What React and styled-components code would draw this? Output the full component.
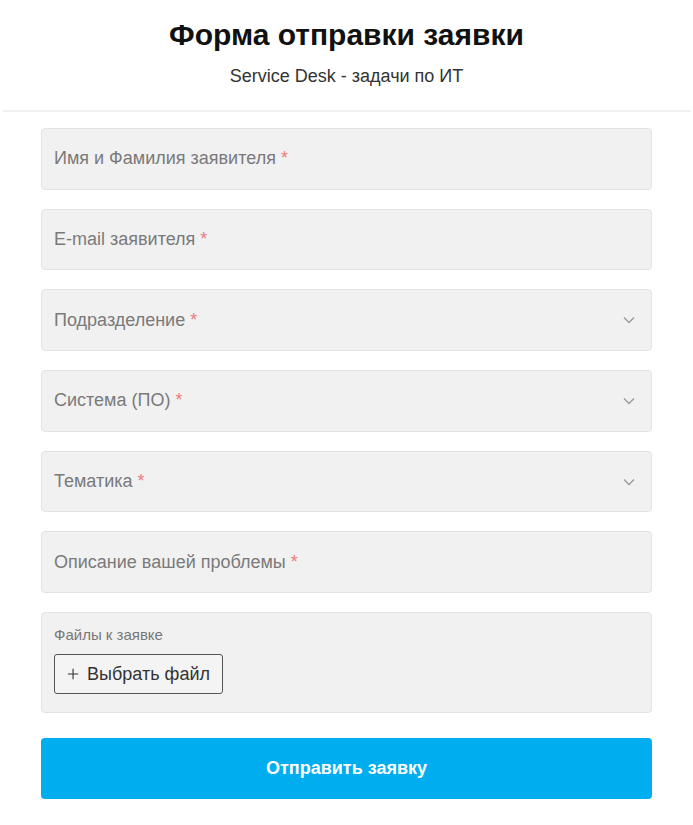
import React from "react";
import styled, { createGlobalStyle } from "styled-components";

const Global = createGlobalStyle`
  html, body { margin: 0; padding: 0; background: #fff; }
  body { font-family: "Liberation Sans", Arial, sans-serif; }
  * { box-sizing: border-box; }
`;

const Page = styled.div`
  width: 693px;
  display: flex;
  flex-direction: column;
  align-items: center;
`;

const Header = styled.header`
  width: 688px;
  display: flex;
  flex-direction: column;
  align-items: center;
  padding-top: 17px;
  padding-bottom: 24px;
  border-bottom: 2px solid #f0f0f0;
`;

const Title = styled.h1`
  margin: 0;
  font-size: 30px;
  line-height: 36px;
  font-weight: 700;
  color: #111;
`;

const Subtitle = styled.p`
  margin: 13px 0 0;
  font-size: 18px;
  line-height: 20px;
  color: #333;
`;

const Form = styled.form`
  width: 611px;
  display: flex;
  flex-direction: column;
  gap: 19px;
  margin-top: 16px;
`;

const Field = styled.div`
  height: 61.7px;
  background: #f1f1f1;
  border: 1px solid #e3e3e3;
  border-radius: 4px;
  display: flex;
  align-items: center;
  justify-content: space-between;
  padding: 0 13px 0 12px;
  font-size: 18px;
  color: #7a7a7a;
`;

const Star = styled.span`
  color: #ee7b7b;
`;

const Chevron = styled.svg`
  width: 14px;
  height: 14px;
  margin-right: 2px;
`;

const FilesBox = styled.div`
  height: 101px;
  background: #f1f1f1;
  border: 1px solid #e3e3e3;
  border-radius: 4px;
  padding: 13px 12px;
  display: flex;
  flex-direction: column;
  align-items: flex-start;
  gap: 10px;
`;

const FilesLabel = styled.span`
  font-size: 15px;
  color: #777;
  line-height: 18px;
`;

const FileButton = styled.button`
  height: 40px;
  width: 169px;
  border: 1px solid #555;
  border-radius: 3px;
  background: #f4f4f4;
  font-family: "Liberation Sans", Arial, sans-serif;
  font-size: 18px;
  color: #333;
  white-space: nowrap;
  display: flex;
  align-items: center;
  gap: 8px;
  padding: 0 12px;
`;

const Submit = styled.button`
  margin-top: 6px;
  height: 61px;
  border: none;
  border-radius: 4px;
  background: #00aeef;
  color: #fff;
  font-family: "Liberation Sans", Arial, sans-serif;
  font-size: 18px;
  font-weight: 700;
`;

const down = (
  <Chevron viewBox="0 0 14 14" fill="none">
    <path d="M2 4.5 L7 9.5 L12 4.5" stroke="#9a9a9a" strokeWidth="1.3" />
  </Chevron>
);

const fields = [
  { label: "Имя и Фамилия заявителя" },
  { label: "E-mail заявителя" },
  { label: "Подразделение", select: true },
  { label: "Система (ПО)", select: true },
  { label: "Тематика", select: true },
  { label: "Описание вашей проблемы" },
];

export default function App() {
  return (
    <Page>
      <Global />
      <Header>
        <Title>Форма отправки заявки</Title>
        <Subtitle>Service Desk - задачи по ИТ</Subtitle>
      </Header>
      <Form onSubmit={(e) => e.preventDefault()}>
        {fields.map((f) => (
          <Field key={f.label}>
            <span>
              {f.label} <Star>*</Star>
            </span>
            {f.select && down}
          </Field>
        ))}
        <FilesBox>
          <FilesLabel>Файлы к заявке</FilesLabel>
          <FileButton type="button">
            <svg width="14" height="14" viewBox="0 0 14 14">
              <path d="M7 1 V13 M1 7 H13" stroke="#333" strokeWidth="1.3" />
            </svg>
            Выбрать файл
          </FileButton>
        </FilesBox>
        <Submit type="submit">Отправить заявку</Submit>
      </Form>
    </Page>
  );
}
